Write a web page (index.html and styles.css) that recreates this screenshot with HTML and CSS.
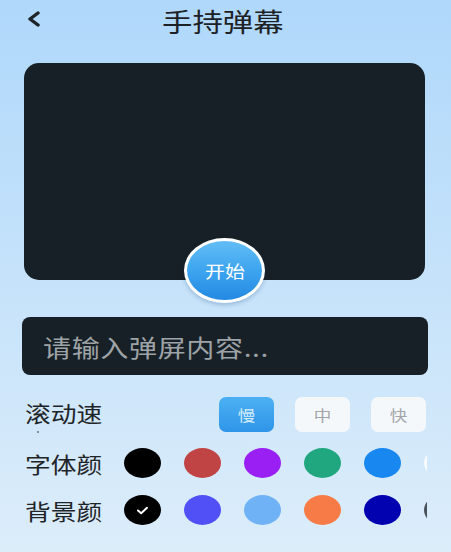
FILE: index.html
```html
<!DOCTYPE html>
<html lang="zh">
<head>
<meta charset="utf-8">
<title>手持弹幕</title>
<link rel="stylesheet" href="styles.css">
</head>
<body>
<div class="page">
  <header class="topbar">
    <svg class="back" viewBox="0 0 14 16" width="14" height="16"><polyline points="11,2 3,8 11,14" fill="none" stroke="#1e2327" stroke-width="3.4" stroke-linecap="round" stroke-linejoin="round"/></svg>
    <h1 class="title"><span class="tx">手持弹幕</span></h1>
  </header>

  <section class="screen">
    <button class="start"><span class="tx">开始</span></button>
  </section>

  <div class="input"><span class="tx placeholder">请输入弹屏内容...</span></div>

  <div class="row speed-row">
    <div class="label"><span class="tx">滚动速</span><i class="cut" aria-hidden="true"></i></div>
    <div class="speeds">
      <button class="speed active"><span class="tx">慢</span></button>
      <button class="speed"><span class="tx">中</span></button>
      <button class="speed"><span class="tx">快</span></button>
    </div>
  </div>

  <div class="row color-row">
    <div class="label"><span class="tx">字体颜</span></div>
    <div class="swatches">
      <span class="dot c-black"></span>
      <span class="dot c-red"></span>
      <span class="dot c-purple"></span>
      <span class="dot c-green"></span>
      <span class="dot c-blue"></span>
      <span class="dot c-white"></span>
    </div>
  </div>

  <div class="row color-row second">
    <div class="label"><span class="tx">背景颜</span></div>
    <div class="swatches">
      <span class="dot c-black selected"><svg viewBox="0 0 14 10" width="13" height="9"><polyline points="2,5 5.5,8 12,2" fill="none" stroke="#fff" stroke-width="2.2" stroke-linecap="round" stroke-linejoin="round"/></svg></span>
      <span class="dot c-indigo"></span>
      <span class="dot c-sky"></span>
      <span class="dot c-orange"></span>
      <span class="dot c-navy"></span>
      <span class="dot c-grey"></span>
    </div>
  </div>
</div>
</body>
</html>
```

FILE: styles.css
```css
* { box-sizing: border-box; }

html, body {
  margin: 0;
  padding: 0;
}

body {
  width: 451px;
  height: 552px;
  overflow: hidden;
  background: linear-gradient(180deg, #afd8fb 0%, #c3e1fa 45%, #dcedfa 100%);
  font-family: "Noto Sans CJK SC", "Noto Sans", sans-serif;
  color: #1f2429;
}

.tx {
  display: inline-block;
  transform: scaleX(1.17);
  transform-origin: left center;
}

.page {
  display: flex;
  flex-direction: column;
}

.topbar {
  height: 42px;
  display: flex;
  align-items: center;
  justify-content: center;
  position: relative;
}

.back {
  position: absolute;
  left: 27px;
  top: 11px;
  width: 14px;
  height: 16px;
}

.title {
  margin: 0;
  font-size: 26px;
  font-weight: 400;
  line-height: 42px;
  color: #1d2125;
  transform: translateX(-11px);
}

.screen {
  position: relative;
  margin: 21px 26px 0 24px;
  height: 217px;
  background: #172026;
  border-radius: 15px;
}

.start {
  position: absolute;
  left: 160px;
  top: 175px;
  width: 81px;
  height: 65px;
  border: 3px solid #ffffff;
  border-radius: 50%;
  background: linear-gradient(180deg, #62bdf6 0%, #3aa2ee 55%, #2389e2 100%);
  box-shadow: 0 2px 4px rgba(0, 60, 120, 0.25);
  color: #ffffff;
  font-family: inherit;
  font-size: 17px;
  padding: 0;
  display: flex;
  align-items: center;
  justify-content: center;
}

.start .tx { transform-origin: center; }

.input {
  margin: 37px 23px 0 22px;
  height: 58px;
  background: #172026;
  border-radius: 8px;
  display: flex;
  align-items: center;
  padding-left: 21px;
}

.placeholder {
  font-size: 24px;
  color: #9ea3a7;
  letter-spacing: 0.5px;
}

.row {
  display: flex;
  align-items: center;
  padding-left: 25px;
}

.label {
  width: 78px;
  flex: none;
  font-size: 22px;
  line-height: 30px;
  color: #1f2429;
  position: relative;
}

.speed-row {
  margin-top: 22px;
  height: 35px;
}

.speed-row .label {
  align-self: flex-start;
  height: 35px;
}

.cut {
  position: absolute;
  left: 12px;
  top: 34px;
  width: 2px;
  height: 2px;
  border-radius: 1px;
  background: #707479;
}

.speeds {
  margin-left: 116px;
  display: flex;
  gap: 21px;
}

.speed {
  width: 55px;
  height: 35px;
  border: none;
  border-radius: 7px;
  background: #f5f8fb;
  color: #a3a6a9;
  font-family: inherit;
  font-size: 15px;
  padding: 0;
  display: flex;
  align-items: center;
  justify-content: center;
}

.speed .tx { transform-origin: center; }

.speed.active {
  background: linear-gradient(180deg, #4cb0f3 0%, #2f95e8 100%);
  color: #d8eefc;
}

.color-row {
  margin-top: 16px;
  height: 30px;
}

.color-row.second { margin-top: 17px; }

.swatches {
  margin-left: 21px;
  width: 303px;
  overflow: hidden;
  display: flex;
  gap: 23px;
}

.dot {
  flex: none;
  width: 37px;
  height: 30px;
  border-radius: 50%;
  display: flex;
  align-items: center;
  justify-content: center;
}

.c-black { background: #000000; }
.c-red { background: #c04444; }
.c-purple { background: #9a1ff2; }
.c-green { background: #21a77f; }
.c-blue { background: #1987f0; }
.c-white { background: #f8fbfe; }
.c-indigo { background: #5050f6; }
.c-sky { background: #70b2f6; }
.c-orange { background: #f77b47; }
.c-navy { background: #0202b0; }
.c-grey { background: #4a5058; }
```
